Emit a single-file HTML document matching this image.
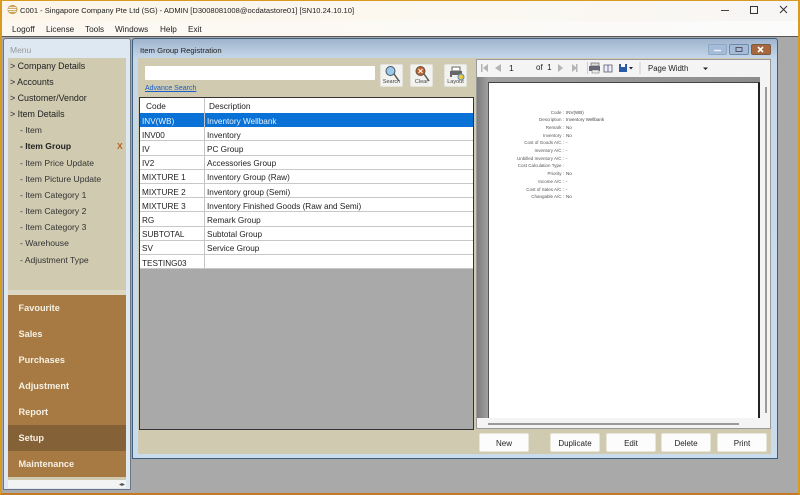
<!DOCTYPE html>
<html><head><meta charset="utf-8"><style>
html,body{margin:0;padding:0;width:800px;height:495px;overflow:hidden;background:#a9a9a9}
*{box-sizing:border-box}
div,span{position:absolute;white-space:nowrap}
body{font-family:"Liberation Sans",sans-serif;font-size:8px;color:#222}
#w{left:0;top:0;width:800px;height:495px;filter:blur(.3px)}
.m{font-size:8.2px;color:#222;top:24px;line-height:12px}
.t{left:10px;font-size:8.9px;color:#222;line-height:12px}
.s{left:20px;font-size:8.6px;color:#333;line-height:12px}
.b{left:8px;width:118px;height:26px;background:#a67a42;color:#f6f0e4;font-weight:bold;font-size:9.2px;padding:0 0 0 10.5px;line-height:26px}
.r{left:140px;width:332.5px;height:14.2px;background:#fff;border-bottom:1px solid #c8c8c8;font-size:8.2px;color:#222;line-height:14px}
.r span{top:1.5px}.r .c{left:2px}.r .d{left:67px}
.btn{top:433px;width:50px;height:19px;background:#fcfcfc;border-radius:2px;text-align:center;font-size:8px;line-height:19px;color:#222;border:1px solid #e8e6d8}
.ib{top:64px;width:23px;height:23px;background:#f2f2ee;border-radius:2px;border:1px solid #e4e4dc;font-size:5.5px;text-align:center;color:#444}
.ib span{left:0;right:0;bottom:0;line-height:7px}
.l{font-size:4.5px;color:#555;text-align:right;left:505px;width:59px;line-height:7.7px}
.v{font-size:4.5px;color:#444;left:566px;line-height:7.7px}
</style></head><body><div id="w">
<div style="left:0;top:0;width:800px;height:495px;border:2px solid #d89a20;border-bottom-color:#c87a20;border-top-width:1px;background:#a9a9a9"></div>
<div style="left:2px;top:1px;width:796px;height:20px;background:linear-gradient(90deg,#fdf6e8,#fbf8f2 60%,#f8f6f4)"></div>
<div style="left:2px;top:21px;width:796px;height:16px;background:linear-gradient(90deg,#fcf8f0,#fbfbfb)"></div>
<div style="left:2px;top:36px;width:796px;height:1px;background:#555"></div>
<svg style="position:absolute;left:7px;top:4px" width="11" height="11" viewBox="0 0 12 12"><ellipse cx="6" cy="6" rx="5.5" ry="5" fill="#c9a35c"/><path d="M2 4h8M1 6h9M2 8h8" stroke="#fff" stroke-width="1"/></svg>
<div style="left:20px;top:4.5px;font-size:7.55px;color:#222;line-height:12px">C001 - Singapore Company Pte Ltd (SG) - ADMIN [D3008081008@ocdatastore01] [SN10.24.10.10]</div>
<div class="m" style="left:12px">Logoff</div><div class="m" style="left:46px">License</div><div class="m" style="left:85px">Tools</div><div class="m" style="left:115px">Windows</div><div class="m" style="left:160px">Help</div><div class="m" style="left:188px">Exit</div>
<svg style="position:absolute;left:718px;top:4px" width="72" height="12" viewBox="0 0 72 12"><path d="M3 6.5h8" stroke="#444"/><rect x="32.5" y="2.5" width="7" height="7" fill="none" stroke="#333" stroke-width="1"/><path d="M62 2l7 7M69 2l-7 7" stroke="#333"/></svg>

<!-- left panel -->
<div style="left:3px;top:38px;width:128px;height:452px;background:#dde8f3;border:1px solid #6d7680;border-radius:3px 3px 0 0"></div>
<div style="left:10px;top:44px;font-size:8.5px;color:#9a9a9a;line-height:12px">Menu</div>
<div style="left:8px;top:58px;width:118px;height:237px;background:#cfcab0"></div>
<div class="t" style="top:60px">&gt; Company Details</div>
<div class="t" style="top:76px">&gt; Accounts</div>
<div class="t" style="top:92px">&gt; Customer/Vendor</div>
<div class="t" style="top:108px">&gt; Item Details</div>
<div class="s" style="top:124px">- Item</div>
<div class="s" style="top:140px;font-weight:bold;color:#222">- Item Group</div>
<div style="left:117px;top:140px;font-size:8.5px;font-weight:bold;color:#b5651d;line-height:12px">X</div>
<div class="s" style="top:156.5px">- Item Price Update</div>
<div class="s" style="top:172.5px">- Item Picture Update</div>
<div class="s" style="top:189px">- Item Category 1</div>
<div class="s" style="top:205px">- Item Category 2</div>
<div class="s" style="top:221px">- Item Category 3</div>
<div class="s" style="top:237px">- Warehouse</div>
<div class="s" style="top:253.5px">- Adjustment Type</div>
<div style="left:8px;top:290px;width:118px;height:5px;background:#dcd8c4"></div>
<div class="b" style="top:295px">Favourite</div>
<div class="b" style="top:321px">Sales</div>
<div class="b" style="top:347px">Purchases</div>
<div class="b" style="top:373px">Adjustment</div>
<div class="b" style="top:399px">Report</div>
<div class="b" style="top:425px;background:#846136">Setup</div>
<div class="b" style="top:451px">Maintenance</div>
<div style="left:8px;top:477px;width:118px;height:3px;background:#cfcab0"></div>
<div style="left:8px;top:480px;width:118px;height:8px;background:#f2f3f3"></div>
<div style="left:119px;top:481px;font-size:6px;color:#555">◂▸</div>

<!-- form window -->
<div style="left:132px;top:38px;width:646px;height:421px;border:1px solid #3d5f7c;border-radius:3px 3px 0 0;background:linear-gradient(180deg,#a0b4ce 0,#c6d8ea 20px,#c9dcee 100%)"></div>
<div style="left:140px;top:45px;font-size:7.7px;color:#222;line-height:12px">Item Group Registration</div>
<div style="left:138px;top:58px;width:633px;height:396px;background:#cfcab0"></div>
<div style="left:708px;top:44px;width:19px;height:11px;background:#a5bcd8;border:1px solid #8ea8c4;border-radius:2px"></div>
<div style="left:729px;top:44px;width:20px;height:11px;background:#a5bcd8;border:1px solid #6f8aa8;border-radius:2px"></div>
<div style="left:751px;top:44px;width:20px;height:11px;background:#a8683e;border:1px solid #7c5a40;border-radius:2px"></div>
<svg style="position:absolute;left:707px;top:44px" width="65" height="11" viewBox="0 0 65 11"><path d="M7 6.5h7" stroke="#eef" stroke-width="1.5"/><rect x="29" y="3.5" width="6" height="4" fill="none" stroke="#556"/><path d="M51 3l5 5M56 3l-5 5" stroke="#fff" stroke-width="1.6"/></svg>

<div style="left:145px;top:66px;width:230px;height:14px;background:#fff;border-radius:1px"></div>
<div style="left:145px;top:83px;font-size:7px;color:#1a5fc4;text-decoration:underline;line-height:10px;margin-top:0.5px">Advance Search</div>
<div class="ib" style="left:380px"><span>Search</span>
<svg style="position:absolute;left:3px;top:0" width="17" height="17" viewBox="0 0 17 17"><circle cx="6.5" cy="6" r="4.5" fill="#9cc8ea" stroke="#456"/><path d="M10 9l5 7" stroke="#555" stroke-width="1.5"/></svg></div>
<div class="ib" style="left:410px"><span>Clear</span>
<svg style="position:absolute;left:3px;top:0" width="17" height="17" viewBox="0 0 17 17"><circle cx="6.5" cy="6" r="4.5" fill="#c0622a" stroke="#654"/><path d="M4.5 4l4 4M8.5 4l-4 4" stroke="#fff"/><path d="M10 9l5 7" stroke="#555" stroke-width="1.5"/></svg></div>
<div class="ib" style="left:444px"><span>Layout</span>
<svg style="position:absolute;left:3px;top:0" width="17" height="16" viewBox="0 0 17 16"><rect x="4" y="2" width="8" height="4" fill="#fff" stroke="#666"/><rect x="2" y="6" width="12" height="6" fill="#666"/><rect x="4" y="10" width="8" height="3" fill="#eee"/><circle cx="13" cy="12" r="3" fill="#e8c840" stroke="#5a8ac0"/></svg></div>

<!-- grid -->
<div style="left:139px;top:97px;width:335px;height:333px;background:#a9a9a9;border:1px solid #333"></div>
<div style="left:140px;top:98px;width:333px;height:15px;background:#fff"></div>
<div style="left:146px;top:100px;font-size:8.3px;color:#222;line-height:12px">Code</div>
<div style="left:209px;top:100px;font-size:8.3px;color:#222;line-height:12px">Description</div>
<div style="left:204px;top:98px;width:1px;height:171px;background:#c4c4c4;z-index:3"></div>
<div class="r" style="top:113px;background:#0a72d6;color:#e8f1fb;border-bottom-color:#0a72d6"><span class="c">INV(WB)</span><span class="d">Inventory Wellbank</span></div>
<div class="r" style="top:127.2px"><span class="c">INV00</span><span class="d">Inventory</span></div>
<div class="r" style="top:141.4px"><span class="c">IV</span><span class="d">PC Group</span></div>
<div class="r" style="top:155.6px"><span class="c">IV2</span><span class="d">Accessories Group</span></div>
<div class="r" style="top:169.8px"><span class="c">MIXTURE 1</span><span class="d">Inventory Group (Raw)</span></div>
<div class="r" style="top:184px"><span class="c">MIXTURE 2</span><span class="d">Inventory group (Semi)</span></div>
<div class="r" style="top:198.2px"><span class="c">MIXTURE 3</span><span class="d">Inventory Finished Goods (Raw and Semi)</span></div>
<div class="r" style="top:212.4px"><span class="c">RG</span><span class="d">Remark Group</span></div>
<div class="r" style="top:226.6px"><span class="c">SUBTOTAL</span><span class="d">Subtotal Group</span></div>
<div class="r" style="top:240.8px"><span class="c">SV</span><span class="d">Service Group</span></div>
<div class="r" style="top:255px"><span class="c">TESTING03</span></div>

<!-- report viewer -->
<div style="left:476px;top:59px;width:295px;height:370px;background:#f4f4f4;border:1px solid #9a9a9a"></div>
<div style="left:477px;top:77px;width:283px;height:341px;background:linear-gradient(90deg,#7c7c7c,#a0a0a0 11px,#8c8c8c)"></div>
<div style="left:488px;top:82px;width:272px;height:336px;background:#fff;border-right:2px solid #222;border-top:1px solid #444;border-left:1px solid #555"></div>
<div style="left:765px;top:87px;width:2px;height:326px;background:#9a9a9a"></div>
<div style="left:488px;top:423px;width:251px;height:2px;background:#9a9a9a"></div>
<svg style="position:absolute;left:478px;top:62px" width="290" height="13" viewBox="0 0 290 13"><g fill="#b4b4b4"><rect x="3" y="2" width="1.5" height="8"/><path d="M10 2v8l-5-4zM23 2v8l-6-4zM80 2v8l5-4zM94 2v8l5-4z"/><rect x="98" y="2" width="1.5" height="8"/></g><rect x="113" y="1" width="8" height="3" fill="#ddd" stroke="#666" stroke-width=".7"/><rect x="111" y="4" width="11" height="5" fill="#667"/><rect x="114" y="8" width="7" height="3" fill="#eee" stroke="#666" stroke-width=".5"/><path d="M126 3h4v7h-4zM130 3h4v7h-4z" fill="#eef" stroke="#556" stroke-width=".8"/><rect x="141" y="2" width="8" height="8" fill="#2a5aa8"/><rect x="143" y="2" width="4" height="3" fill="#fff"/><path d="M151 5h4l-2 2.5z" fill="#222"/><path d="M109.5 0v12M162 0v12" stroke="#ccc"/><path d="M225 5.5h5l-2.5 2.5z" fill="#222"/></svg>
<div style="left:509px;top:62px;font-size:8.5px;color:#222;line-height:12px">1</div>
<div style="left:536px;top:62px;font-size:8px;color:#222;line-height:12px">of&nbsp; 1</div>
<div style="left:648px;top:62.5px;font-size:7.8px;color:#222;line-height:12px">Page Width</div>
<div class="l" style="top:108.5px">Code :<br>Description :<br>Remark :<br>Inventory :<br>Cost of Goods A/C :<br>Inventory A/C :<br>Unbilled Inventory A/C :<br>Cost Calculation Type :<br>Priority :<br>Income A/C :<br>Cost of Sales A/C :<br>Changable A/C :</div>
<div class="v" style="top:108.5px">INV(WB)<br>Inventory Wellbank<br>No<br>No<br>-<br>-<br>-<br>&nbsp;<br>No<br>-<br>-<br>No</div>

<div class="btn" style="left:479px">New</div><div class="btn" style="left:550px">Duplicate</div><div class="btn" style="left:606px">Edit</div><div class="btn" style="left:661px">Delete</div><div class="btn" style="left:717px">Print</div>
</div></body></html>
